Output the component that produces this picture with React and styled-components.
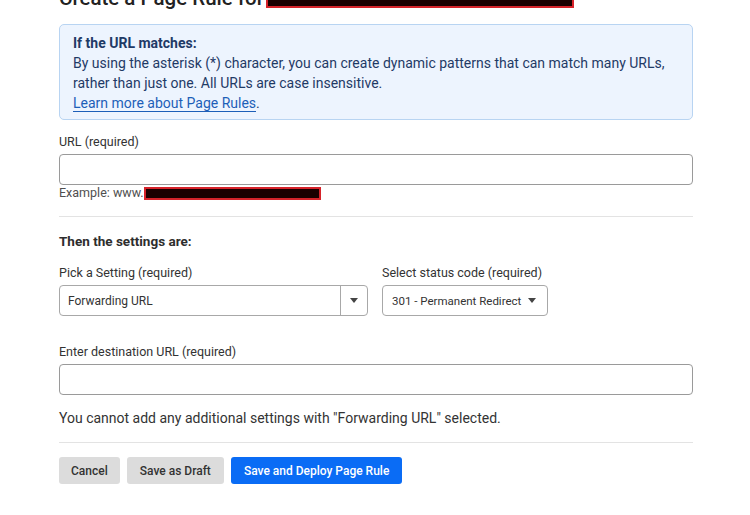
import React from 'react';
import styled, { createGlobalStyle } from 'styled-components';

const GlobalStyle = createGlobalStyle`
  html, body {
    margin: 0;
    padding: 0;
    background: #ffffff;
    overflow: hidden;
  }
  body {
    font-family: Roboto, "Noto Sans", sans-serif;
    color: #313131;
  }
`;

const Page = styled.div`
  width: 634px;
  padding: 0 57px 0 59px;
`;

const Title = styled.h1`
  margin: -14px 0 0;
  font-size: 20.5px;
  font-weight: 500;
  line-height: 24px;
  color: #222;
  display: flex;
  align-items: center;
  gap: 2px;
`;

const Redacted = styled.span`
  display: inline-block;
  width: ${p => p.w}px;
  height: ${p => p.h}px;
  background: #1a0000;
  border: 2px solid #d6232a;
  box-sizing: border-box;
  vertical-align: middle;
`;

const InfoBox = styled.div`
  margin-top: 14px;
  background: #edf4fe;
  border: 1px solid #b8d4f2;
  border-radius: 5px;
  padding: 8px 13px 6px;
  color: #1f3a66;
  font-size: 14px;
  line-height: 20px;
`;

const InfoTitle = styled.div`
  font-weight: 700;
`;

const Link = styled.a`
  color: #1d5fb8;
  text-decoration: none;
  border-bottom: 1px solid #1d5fb8;
`;

const Field = styled.div`
  margin-top: ${p => p.mt || 0}px;
  display: flex;
  flex-direction: column;
`;

const Label = styled.label`
  font-size: 12.5px;
  line-height: 16px;
  color: #333;
  margin-bottom: 4px;
`;

const TextInput = styled.input`
  box-sizing: border-box;
  width: 100%;
  height: 31px;
  border: 1px solid #9a9a9a;
  border-radius: 4px;
  outline: none;
`;

const Hint = styled.div`
  font-size: 12.5px;
  line-height: 16px;
  color: #4f4f4f;
  display: flex;
  align-items: center;
`;

const Divider = styled.hr`
  border: none;
  border-top: 1px solid #e3e3e3;
  margin: ${p => p.m};
`;

const SectionTitle = styled.div`
  font-size: 13.5px;
  font-weight: 700;
  color: #2d2d2d;
  line-height: 18px;
`;

const Row = styled.div`
  display: flex;
  gap: 14px;
  margin-top: 15px;
`;

const SelectBox = styled.div`
  box-sizing: border-box;
  width: ${p => p.w}px;
  height: 31px;
  border: 1px solid #a8a8a8;
  border-radius: 4px;
  display: flex;
  align-items: center;
  font-size: ${p => p.fs || 12}px;
  color: #333;
  white-space: nowrap;
`;

const SelectValue = styled.div`
  flex: 1;
  padding-left: ${p => p.pl}px;
`;

const ArrowCell = styled.div`
  width: 26px;
  height: 100%;
  display: flex;
  align-items: center;
  justify-content: center;
  border-left: ${p => (p.split ? '1px solid #a8a8a8' : 'none')};
  margin-right: ${p => (p.split ? 0 : 4)}px;
`;

const Caret = styled.span`
  width: 0;
  height: 0;
  border-left: 4.5px solid transparent;
  border-right: 4.5px solid transparent;
  border-top: 5px solid #444;
`;

const Notice = styled.p`
  margin: 13px 0 0;
  font-size: 14px;
  line-height: 20px;
  color: #333;
`;

const Actions = styled.div`
  display: flex;
  gap: 7px;
`;

const Button = styled.button`
  height: 27px;
  padding: 0 ${p => p.px}px;
  border: none;
  border-radius: 3px;
  font-family: Roboto, "Noto Sans", sans-serif;
  font-size: 12px;
  font-weight: 500;
  background: ${p => (p.primary ? '#0a6cf5' : '#dcdcdc')};
  color: ${p => (p.primary ? '#ffffff' : '#333333')};
`;

export default function App() {
  return (
    <>
      <GlobalStyle />
      <Page>
        <Title>
          Create a Page Rule for <Redacted w={308} h={20} />
        </Title>

        <InfoBox>
          <InfoTitle>If the URL matches:</InfoTitle>
          <div>
            By using the asterisk (*) character, you can create dynamic patterns that can match many URLs,
            rather than just one. All URLs are case insensitive.
          </div>
          <div>
            <Link href="#">Learn more about Page Rules</Link>.
          </div>
        </InfoBox>

        <Field mt={14}>
          <Label>URL (required)</Label>
          <TextInput />
          <Hint>
            Example: www.<Redacted w={177} h={13} />
          </Hint>
        </Field>

        <Divider m="15px 0 15px" />

        <SectionTitle>Then the settings are:</SectionTitle>

        <Row>
          <Field>
            <Label>Pick a Setting (required)</Label>
            <SelectBox w={309}>
              <SelectValue pl={8}>Forwarding URL</SelectValue>
              <ArrowCell split>
                <Caret />
              </ArrowCell>
            </SelectBox>
          </Field>
          <Field>
            <Label>Select status code (required)</Label>
            <SelectBox w={166} fs={11.5}>
              <SelectValue pl={9}>301 - Permanent Redirect</SelectValue>
              <ArrowCell>
                <Caret />
              </ArrowCell>
            </SelectBox>
          </Field>
        </Row>

        <Field mt={28}>
          <Label>Enter destination URL (required)</Label>
          <TextInput />
        </Field>

        <Notice>You cannot add any additional settings with "Forwarding URL" selected.</Notice>

        <Divider m="14px 0 14px" />

        <Actions>
          <Button px={12}>Cancel</Button>
          <Button px={13}>Save as Draft</Button>
          <Button primary px={13}>Save and Deploy Page Rule</Button>
        </Actions>
      </Page>
    </>
  );
}
